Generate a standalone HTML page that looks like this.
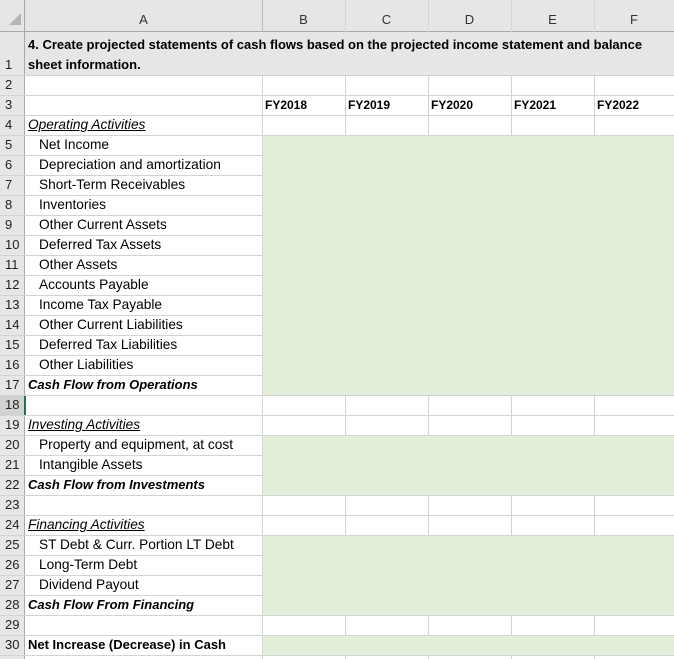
<!DOCTYPE html>
<html><head><style>
*{margin:0;padding:0;box-sizing:border-box}
body{width:674px;height:659px;overflow:hidden;background:#fff;font-family:"Liberation Sans",sans-serif;font-size:13px;color:#000;position:relative}
.a{position:absolute}
.hl{position:absolute;height:1px;background:#d4d4d4}
.vl{position:absolute;width:1px;background:#d4d4d4}
.rn{position:absolute;left:0;width:25px;text-align:left;padding-left:5px;color:#222;font-size:13px;line-height:20px}
.t{position:absolute;left:28px;line-height:20px;white-space:nowrap}
.in{left:39px;font-size:13.7px}
.b{font-weight:bold}
.i{font-style:italic}
.u{text-decoration:underline;font-size:13.7px}
</style></head><body>
<div class="a" style="left:0;top:0;width:674px;height:32px;background:#e6e6e6"></div>
<div class="a" style="left:0;top:32px;width:25px;height:627px;background:#e6e6e6"></div>
<div class="a" style="left:0;top:31px;width:674px;height:1px;background:#aaa"></div>
<div class="a" style="left:24px;top:0;width:1px;height:659px;background:#aaa"></div>
<svg class="a" style="left:8px;top:12px" width="14" height="14"><polygon points="13,1 13,13 1,13" fill="#b5b5b5"/></svg>
<div class="a" style="left:25px;top:12px;width:237px;text-align:center;color:#333">A</div>
<div class="a" style="left:262px;top:12px;width:83px;text-align:center;color:#333">B</div>
<div class="a" style="left:345px;top:12px;width:83px;text-align:center;color:#333">C</div>
<div class="a" style="left:428px;top:12px;width:83px;text-align:center;color:#333">D</div>
<div class="a" style="left:511px;top:12px;width:83px;text-align:center;color:#333">E</div>
<div class="a" style="left:594px;top:12px;width:80px;text-align:center;color:#333">F</div>
<div class="rn" style="top:55px">1</div>
<div class="a" style="left:0;top:395px;width:25px;height:20px;background:#d2d2d2"></div>
<div class="a" style="left:24px;top:395px;width:2px;height:20px;background:#217346"></div>
<div id="rows"></div>
<script>
var L=[
[4,"<span class='i u'>Operating Activities</span>",0],
[5,"Net Income",1],[6,"Depreciation and amortization",1],[7,"Short-Term Receivables",1],[8,"Inventories",1],[9,"Other Current Assets",1],[10,"Deferred Tax Assets",1],[11,"Other Assets",1],[12,"Accounts Payable",1],[13,"Income Tax Payable",1],[14,"Other Current Liabilities",1],[15,"Deferred Tax Liabilities",1],[16,"Other Liabilities",1],
[17,"<span class='b i'>Cash Flow from Operations</span>",0],[19,"<span class='i u'>Investing Activities</span>",0],
[20,"Property and equipment, at cost",1],[21,"Intangible Assets",1],[22,"<span class='b i'>Cash Flow from Investments</span>",0],
[24,"<span class='i u'>Financing Activities</span>",0],[25,"ST Debt &amp; Curr. Portion LT Debt",1],[26,"Long-Term Debt",1],[27,"Dividend Payout",1],
[28,"<span class='b i'>Cash Flow From Financing</span>",0],[30,"<span class='b'>Net Increase (Decrease) in Cash</span>",0]];
var h="";
h+="<div class='rn' style='top:75px'>2</div>";
h+="<div class='hl' style='left:0;top:75px;width:674px'></div>";
for(var r=3;r<=30;r++){var y=95+(r-3)*20;h+="<div class='rn' style='top:"+y+"px'>"+r+"</div>";h+="<div class='hl' style='left:0;top:"+y+"px;width:674px'></div>";}
h+="<div class='hl' style='left:0;top:655px;width:674px'></div>";
L.forEach(function(e){var y=95+(e[0]-3)*20;h+="<div class='t"+(e[2]?" in":"")+"' style='top:"+y+"px'>"+e[1]+"</div>";});
var fy=["FY2018","FY2019","FY2020","FY2021","FY2022"],xs=[262,345,428,511,594];
fy.forEach(function(f,i){h+="<div class='t b' style='left:"+(xs[i]+3)+"px;top:95px;font-size:12px'>"+f+"</div>";});
xs.forEach(function(x){h+="<div class='vl' style='left:"+x+"px;top:0;height:659px'></div>";});
document.getElementById('rows').innerHTML=h;
</script>
<div class="a" style="left:263px;top:136px;width:411px;height:259px;background:#e2efda"></div>
<div class="a" style="left:263px;top:436px;width:411px;height:59px;background:#e2efda"></div>
<div class="a" style="left:263px;top:536px;width:411px;height:79px;background:#e2efda"></div>
<div class="a" style="left:263px;top:636px;width:411px;height:19px;background:#e2efda"></div>
<div class="a" style="left:25px;top:32px;width:649px;height:43px;background:#e7e6e6"></div>
<div class="t b" style="top:35px">4. Create projected statements of cash flows based on the projected income statement and balance</div>
<div class="t b" style="top:55px">sheet information.</div>
<div class="a" style="left:262px;top:0;width:1px;height:32px;background:#bbb"></div>
</body></html>
